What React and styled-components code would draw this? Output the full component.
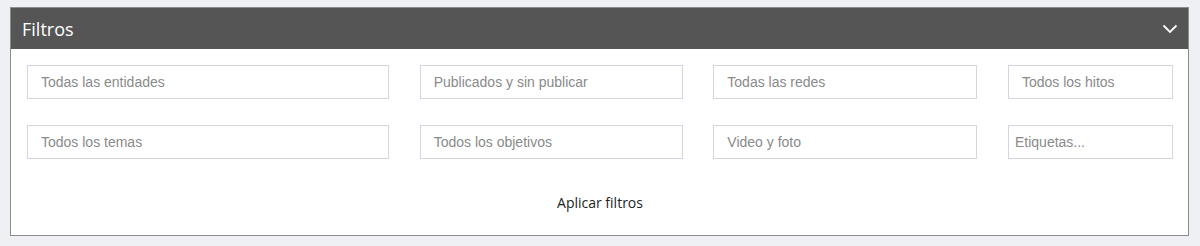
import styled, { createGlobalStyle } from "styled-components";

const Global = createGlobalStyle`
  html, body {
    margin: 0;
    background: #eff0f4;
  }
`;

const Page = styled.div`
  padding: 7px 11px 10px 10px;
`;

const Panel = styled.section`
  border: 1px solid #8c8c8c;
  background: #fff;
`;

const Header = styled.header`
  display: flex;
  align-items: center;
  justify-content: space-between;
  height: 41px;
  padding: 0 10px 0 11px;
  background: #555555;
  color: #fff;
  font-family: "Open Sans", sans-serif;
  font-size: 18px;
`;

const Toggle = styled.button`
  display: flex;
  border: 0;
  padding: 0;
  background: none;
  cursor: pointer;
`;

const Body = styled.div`
  padding: 16px 15px 15px 16px;
`;

const Grid = styled.div`
  display: grid;
  grid-template-columns: 362px 263px 264px 165px;
  justify-content: space-between;
  row-gap: 26px;
`;

const Field = styled.input`
  box-sizing: border-box;
  width: 100%;
  height: 34px;
  padding: 0 0 0 ${(p) => p.$pad || 13}px;
  border: 1px solid #d3d6e2;
  border-radius: 0;
  outline: none;
  font-family: "Liberation Sans", Arial, sans-serif;
  font-size: 14px;
  color: #333;
  &::placeholder {
    color: #8a8a8a;
  }
`;

const Actions = styled.div`
  display: flex;
  justify-content: center;
  margin-top: 25px;
`;

const ApplyButton = styled.button`
  height: 36px;
  padding: 0 12px;
  border: 0;
  background: none;
  font-family: "Open Sans", sans-serif;
  font-size: 14px;
  color: #222;
  cursor: pointer;
`;

const fields = [
  { label: "Todas las entidades" },
  { label: "Publicados y sin publicar" },
  { label: "Todas las redes" },
  { label: "Todos los hitos" },
  { label: "Todos los temas" },
  { label: "Todos los objetivos" },
  { label: "Video y foto" },
  { label: "Etiquetas...", pad: 6 },
];

export default function App() {
  return (
    <>
      <Global />
      <Page>
        <Panel>
          <Header>
            <span>Filtros</span>
            <Toggle aria-label="Contraer">
              <svg width="16" height="10" viewBox="0 0 16 10">
                <path
                  d="M1.5 1.5 L8 8 L14.5 1.5"
                  fill="none"
                  stroke="#fff"
                  strokeWidth="1.8"
                />
              </svg>
            </Toggle>
          </Header>
          <Body>
            <Grid>
              {fields.map((f) => (
                <Field key={f.label} placeholder={f.label} $pad={f.pad} />
              ))}
            </Grid>
            <Actions>
              <ApplyButton>Aplicar filtros</ApplyButton>
            </Actions>
          </Body>
        </Panel>
      </Page>
    </>
  );
}
